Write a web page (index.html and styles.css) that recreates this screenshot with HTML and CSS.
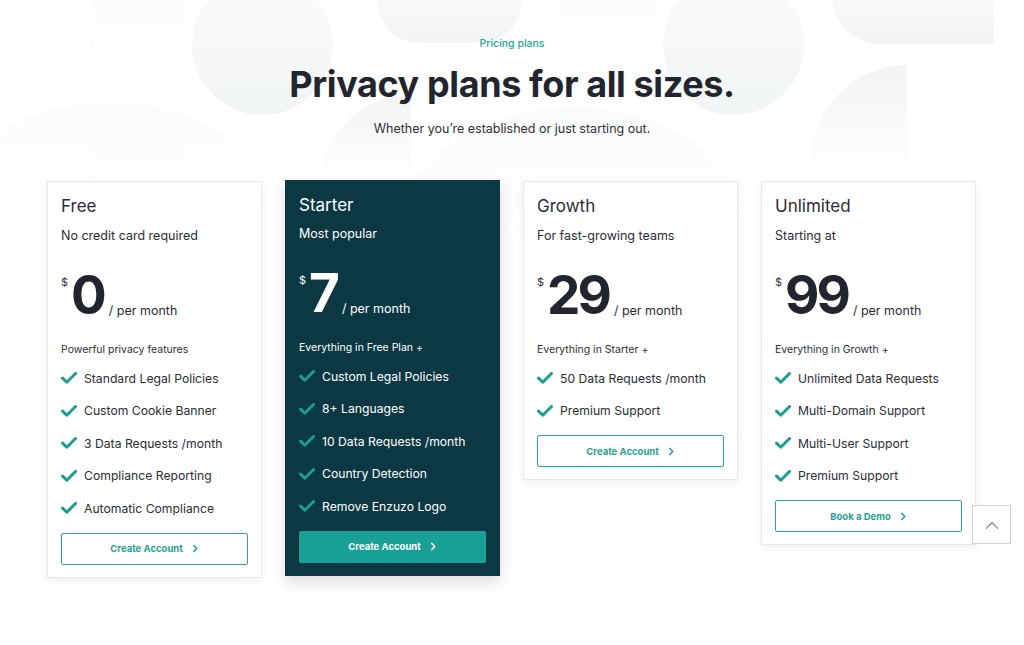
FILE: index.html
```html
<!DOCTYPE html>
<html lang="en">
<head>
<meta charset="utf-8">
<title>Pricing plans</title>
<link rel="stylesheet" href="styles.css">
</head>
<body>
<div class="page">
  <div class="decor" aria-hidden="true">
    <span class="blob col1"></span>
    <span class="blob col2"></span>
    <span class="blob arc1"></span>
    <span class="blob arc2"></span>
    <span class="blob c1"></span>
    <span class="blob c2"></span>
    <span class="blob t1"></span>
    <span class="blob t2"></span>
    <span class="blob q1"></span>
    <span class="blob q2"></span>
  </div>
  <header class="intro">
    <p class="eyebrow">Pricing plans</p>
    <h1>Privacy plans for all sizes.</h1>
    <p class="lead">Whether you’re established or just starting out.</p>
  </header>

  <main class="plans">
    <section class="card">
      <h2>Free</h2>
      <p class="tag">No credit card required</p>
      <div class="price"><span class="cur">$</span><span class="amt">0</span><span class="per">/ per month</span></div>
      <p class="incl">Powerful privacy features</p>
      <ul class="feats">
        <li><svg viewBox="0 0 16 12"><path d="M1.5 6.2 5.8 10.2 14.5 1.5"/></svg>Standard Legal Policies</li>
        <li><svg viewBox="0 0 16 12"><path d="M1.5 6.2 5.8 10.2 14.5 1.5"/></svg>Custom Cookie Banner</li>
        <li><svg viewBox="0 0 16 12"><path d="M1.5 6.2 5.8 10.2 14.5 1.5"/></svg>3 Data Requests /month</li>
        <li><svg viewBox="0 0 16 12"><path d="M1.5 6.2 5.8 10.2 14.5 1.5"/></svg>Compliance Reporting</li>
        <li><svg viewBox="0 0 16 12"><path d="M1.5 6.2 5.8 10.2 14.5 1.5"/></svg>Automatic Compliance</li>
      </ul>
      <a class="btn" href="#">Create Account<svg viewBox="0 0 8 10"><path d="M2 1.5 5.5 5 2 8.5"/></svg></a>
    </section>

    <section class="card dark">
      <h2>Starter</h2>
      <p class="tag">Most popular</p>
      <div class="price"><span class="cur">$</span><span class="amt">7</span><span class="per">/ per month</span></div>
      <p class="incl">Everything in Free Plan +</p>
      <ul class="feats">
        <li><svg viewBox="0 0 16 12"><path d="M1.5 6.2 5.8 10.2 14.5 1.5"/></svg>Custom Legal Policies</li>
        <li><svg viewBox="0 0 16 12"><path d="M1.5 6.2 5.8 10.2 14.5 1.5"/></svg>8+ Languages</li>
        <li><svg viewBox="0 0 16 12"><path d="M1.5 6.2 5.8 10.2 14.5 1.5"/></svg>10 Data Requests /month</li>
        <li><svg viewBox="0 0 16 12"><path d="M1.5 6.2 5.8 10.2 14.5 1.5"/></svg>Country Detection</li>
        <li><svg viewBox="0 0 16 12"><path d="M1.5 6.2 5.8 10.2 14.5 1.5"/></svg>Remove Enzuzo Logo</li>
      </ul>
      <a class="btn solid" href="#">Create Account<svg viewBox="0 0 8 10"><path d="M2 1.5 5.5 5 2 8.5"/></svg></a>
    </section>

    <section class="card">
      <h2>Growth</h2>
      <p class="tag">For fast-growing teams</p>
      <div class="price"><span class="cur">$</span><span class="amt">29</span><span class="per">/ per month</span></div>
      <p class="incl">Everything in Starter +</p>
      <ul class="feats">
        <li><svg viewBox="0 0 16 12"><path d="M1.5 6.2 5.8 10.2 14.5 1.5"/></svg>50 Data Requests /month</li>
        <li><svg viewBox="0 0 16 12"><path d="M1.5 6.2 5.8 10.2 14.5 1.5"/></svg>Premium Support</li>
      </ul>
      <a class="btn" href="#">Create Account<svg viewBox="0 0 8 10"><path d="M2 1.5 5.5 5 2 8.5"/></svg></a>
    </section>

    <section class="card">
      <h2>Unlimited</h2>
      <p class="tag">Starting at</p>
      <div class="price"><span class="cur">$</span><span class="amt">99</span><span class="per">/ per month</span></div>
      <p class="incl">Everything in Growth +</p>
      <ul class="feats">
        <li><svg viewBox="0 0 16 12"><path d="M1.5 6.2 5.8 10.2 14.5 1.5"/></svg>Unlimited Data Requests</li>
        <li><svg viewBox="0 0 16 12"><path d="M1.5 6.2 5.8 10.2 14.5 1.5"/></svg>Multi-Domain Support</li>
        <li><svg viewBox="0 0 16 12"><path d="M1.5 6.2 5.8 10.2 14.5 1.5"/></svg>Multi-User Support</li>
        <li><svg viewBox="0 0 16 12"><path d="M1.5 6.2 5.8 10.2 14.5 1.5"/></svg>Premium Support</li>
      </ul>
      <a class="btn" href="#">Book a Demo<svg viewBox="0 0 8 10"><path d="M2 1.5 5.5 5 2 8.5"/></svg></a>
    </section>
  </main>

  <a class="totop" href="#" aria-label="Back to top"><svg viewBox="0 0 20 12"><path d="M3 10 10 3 17 10"/></svg></a>
</div>
</body>
</html>
```

FILE: styles.css
```css
* { box-sizing: border-box; }
html, body { margin: 0; padding: 0; }
body {
  background: #ffffff;
  font-family: Inter, "Noto Sans", "Liberation Sans", sans-serif;
  color: #2b2d33;
  width: 1024px;
  height: 645px;
  overflow: hidden;
}
.page {
  position: relative;
  width: 1024px;
  height: 645px;
  padding-top: 37px;
}

/* faint decorative background shapes */
.decor { position: absolute; left: 0; top: 0; width: 1024px; height: 300px; z-index: 0; pointer-events: none; overflow: hidden; }
.blob { position: absolute; display: block; }
.col1 { left: 90px; top: 0; width: 95px; height: 240px; background: linear-gradient(180deg, #fbfcfc, rgba(255,255,255,0)); }
.col2 { left: 560px; top: 0; width: 96px; height: 200px; background: linear-gradient(180deg, #fbfcfc, rgba(255,255,255,0)); }
.arc1 { left: -60px; top: 103px; width: 340px; height: 240px; border-radius: 50%; background: linear-gradient(180deg, #fafbfb, rgba(255,255,255,0) 55%); }
.arc2 { left: 400px; top: 108px; width: 345px; height: 240px; border-radius: 50%; background: linear-gradient(180deg, #f9fafa, rgba(255,255,255,0) 55%); }
.c1 { left: 192px; top: -26px; width: 141px; height: 141px; border-radius: 50%; background: linear-gradient(180deg, #fbfcfc, #f2f5f5); }
.c2 { left: 663px; top: -26px; width: 141px; height: 141px; border-radius: 50%; background: linear-gradient(180deg, #fbfcfc, #f2f5f5); }
.t1 { left: 377px; top: -10px; width: 145px; height: 53px; border-radius: 0 0 42px 42px; background: linear-gradient(180deg, #fafbfb, #f3f5f5); }
.t2 { left: 832px; top: -10px; width: 162px; height: 54px; border-radius: 0 0 0 48px; background: linear-gradient(180deg, #fafbfb, #f2f4f4); }
.q1 { left: 320px; top: 95px; width: 91px; height: 110px; border-radius: 91px 0 0 0; background: linear-gradient(180deg, #f3f5f5, rgba(255,255,255,0) 85%); }
.q2 { left: 812px; top: 65px; width: 95px; height: 140px; border-radius: 95px 0 0 0; background: linear-gradient(180deg, #f3f5f5, rgba(255,255,255,0) 85%); }

.intro { position: relative; z-index: 1; text-align: center; }
.eyebrow {
  margin: 0;
  font-size: 10.5px;
  font-weight: 500;
  color: #21a79a;
  line-height: 13px;
}
h1 {
  margin: 12px 0 0;
  font-size: 36px;
  line-height: 44px;
  font-weight: 700;
  letter-spacing: -0.4px;
  color: #23252e;
}
.lead {
  margin: 15px 0 0;
  font-size: 12.5px;
  line-height: 16px;
  color: #2f3137;
}

.plans {
  position: relative;
  z-index: 1;
  display: flex;
  align-items: flex-start;
  gap: 23px;
  margin: 44px 0 0 47px;
}
.card {
  width: 215px;
  background: #fff;
  border: 1px solid #e7e8e9;
  box-shadow: 0 3px 8px rgba(0,0,0,0.06);
  padding: 12px 13px 12px 13px;
  display: flex;
  flex-direction: column;
}
.card h2 {
  margin: 0;
  font-size: 17px;
  line-height: 24px;
  font-weight: 400;
  color: #2b2d33;
}
.tag {
  margin: 9px 0 0;
  font-size: 12.5px;
  line-height: 18px;
  color: #2b2d33;
}
.price {
  display: flex;
  align-items: flex-end;
  margin-top: 22px;
  height: 50px;
}
.cur {
  align-self: flex-start;
  font-size: 11px;
  line-height: 12px;
  margin-top: 9px;
  margin-right: 3px;
}
.amt {
  font-size: 53px;
  line-height: 44px;
  font-weight: 700;
  letter-spacing: -3px;
  color: #23252e;
}
.per {
  font-size: 12.5px;
  line-height: 14px;
  margin-left: 5px;
  margin-bottom: -1px;
}
.incl {
  margin: 26px 0 0;
  font-size: 10.5px;
  line-height: 14px;
}
.feats { list-style: none; margin: 5px 0 0; padding: 0; }
.feats li {
  display: flex;
  align-items: center;
  height: 32.5px;
  font-size: 12.2px;
  color: #2b2d33;
}
.feats svg {
  width: 16px;
  height: 12px;
  margin-right: 7px;
  flex: none;
  fill: none;
  stroke: #1a9d92;
  stroke-width: 3;
  stroke-linecap: round;
  stroke-linejoin: round;
}
.btn {
  margin-top: 8px;
  height: 32px;
  border: 1px solid #27a89c;
  border-radius: 2px;
  display: flex;
  align-items: center;
  justify-content: center;
  gap: 9px;
  font-size: 9.5px;
  font-weight: 700;
  color: #1fa195;
  text-decoration: none;
  background: #fff;
}
.btn svg {
  width: 7px;
  height: 9px;
  fill: none;
  stroke: currentColor;
  stroke-width: 1.8;
  stroke-linecap: round;
  stroke-linejoin: round;
}
.card.dark {
  background: #0b3843;
  border-color: #0b3843;
  box-shadow: 0 6px 14px rgba(0,0,0,0.14);
  margin-top: -1px;
  padding-bottom: 12px;
}
.card.dark .price { margin-top: 22px; }
.card.dark .tag { margin-top: 8px; }
.card.dark h2, .card.dark .tag, .card.dark .cur, .card.dark .amt,
.card.dark .per, .card.dark .incl, .card.dark .feats li { color: #ffffff; }
.btn.solid { background: #17a196; border-color: #17a196; color: #ffffff; }

.totop {
  position: absolute;
  left: 972px;
  top: 505px;
  width: 39px;
  height: 39px;
  background: #fff;
  border: 1px solid #cfd1d3;
  display: flex;
  align-items: center;
  justify-content: center;
  z-index: 2;
}
.totop svg {
  width: 16px;
  height: 10px;
  fill: none;
  stroke: #9a9da0;
  stroke-width: 2;
  stroke-linecap: round;
  stroke-linejoin: round;
}
```
